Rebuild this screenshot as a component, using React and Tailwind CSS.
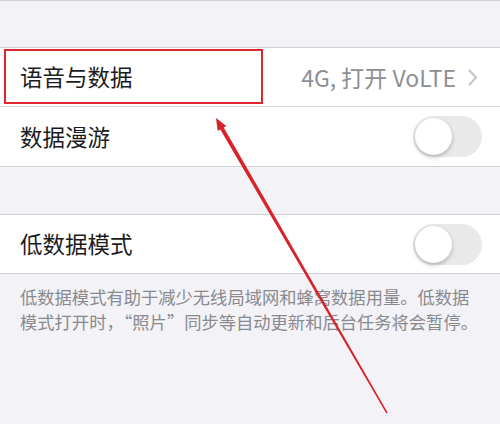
import React from "react";

const font = { fontFamily: '"Noto Sans CJK SC", "Noto Sans", sans-serif' };

function Toggle() {
  return (
    <div className="w-[69px] h-[41px] rounded-full bg-[#e9e9ea] p-[2px] flex items-center">
      <div className="w-[37px] h-[37px] rounded-full bg-white shadow-[0_2px_4px_rgba(0,0,0,0.25)]" />
    </div>
  );
}

export default function App() {
  return (
    <div className="relative w-[500px] h-[424px] bg-[#f2f2f7] overflow-hidden" style={font}>
      <div className="h-[47px] border-t border-[#d1d1d6]" />

      <div className="bg-white border-y border-[#d1d1d6]">
        <div className="h-[59px] flex items-center pl-5 pr-[22px] border-b border-[#d8d8dc]">
          <span className="text-[22.5px] text-[#1c1c1e]">语音与数据</span>
          <span className="ml-auto text-[23px] text-[#8e8e93]">4G, 打开 VoLTE</span>
          <svg className="ml-3" width="10" height="17" viewBox="0 0 10 17">
            <path d="M1.5 1.5 L8 8.5 L1.5 15.5" fill="none" stroke="#c4c4c7" strokeWidth="2" strokeLinecap="round" strokeLinejoin="round" />
          </svg>
        </div>
        <div className="h-[59px] flex items-center pl-5 pr-[18px]">
          <span className="text-[22.5px] text-[#1c1c1e]">数据漫游</span>
          <div className="ml-auto"><Toggle /></div>
        </div>
      </div>

      <div className="h-[47px]" />

      <div className="bg-white border-y border-[#d1d1d6]">
        <div className="h-[58px] flex items-center pl-5 pr-[18px]">
          <span className="text-[22.5px] text-[#1c1c1e]">低数据模式</span>
          <div className="ml-auto"><Toggle /></div>
        </div>
      </div>

      <p className="px-5 pt-[10px] text-[17.3px] leading-[25px] text-[#8a8a8e] whitespace-nowrap">
        低数据模式有助于减少无线局域网和蜂窝数据用量。低数据
        <br />
        模式打开时，“照片”同步等自动更新和后台任务将会暂停。
      </p>

      <div className="absolute left-[4px] top-[49px] w-[259px] h-[55px] border-2 border-[#e0262c]" />

      <svg className="absolute inset-0" width="500" height="424" viewBox="0 0 500 424">
        <polygon
          points="216,118 226.3,125.9 223.7,127.4 387.6,412.6 386.4,413.4 220.3,129.4 217.7,130.9"
          fill="#d8232a"
        />
      </svg>
    </div>
  );
}
